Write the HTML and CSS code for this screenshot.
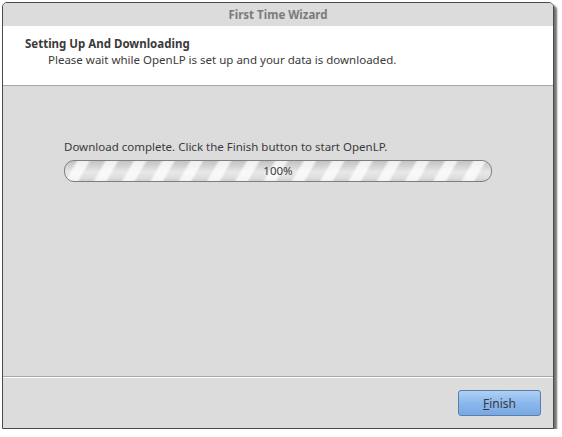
FILE: index.html
```html
<!DOCTYPE html>
<html>
<head>
<meta charset="utf-8">
<link rel="stylesheet" href="styles.css">
</head>
<body>
<div class="window">
  <div class="titlebar">First Time Wizard</div>
  <div class="header">
    <div class="h-title">Setting Up And Downloading</div>
    <div class="h-sub">Please wait while OpenLP is set up and your data is downloaded.</div>
  </div>
  <div class="content">
    <div class="status">Download complete. Click the Finish button to start OpenLP.</div>
    <div class="progress"><span class="pct">100%</span></div>
  </div>
  <div class="footer">
    <button class="btn"><span class="u">F</span>inish</button>
  </div>
</div>
</body>
</html>
```
FILE: styles.css
```css
html, body { margin: 0; padding: 0; background: #ffffff; }
body {
  font-family: "Noto Sans", "Open Sans", sans-serif;
  font-size: 11.5px;
  color: #3a3a3a;
  padding: 2px 0 0 2px;
}
.window {
  width: 550px;
  height: 425px;
  border: 1px solid #4a4a4a;
  border-radius: 5px 5px 0 0;
  background: #dcdcdc;
  box-shadow: 3px 3px 2px rgba(0,0,0,0.55);
  display: flex;
  flex-direction: column;
  overflow: hidden;
}
.titlebar {
  height: 23px;
  line-height: 23px;
  text-align: center;
  font-weight: bold;
  color: #7b7b7b;
  background: #dcdcdc;
  flex: none;
}
.header {
  background: #ffffff;
  border-bottom: 1px solid #a7a7a7;
  padding: 10px 0 0 22px;
  box-sizing: border-box;
  height: 60px;
  flex: none;
}
.h-title { font-weight: bold; line-height: 16px; }
.h-sub { padding-left: 23px; line-height: 16px; }
.content {
  flex: 1;
  padding: 52px 0 0 61px;
  border-bottom: 1px solid #a9a9a9;
  box-shadow: 0 1px 0 #ffffff;
}
.status { line-height: 18px; margin-bottom: 4px; }
.progress {
  width: 426px;
  height: 20px;
  border: 1px solid #7e7e7e;
  border-radius: 10px;
  background:
    repeating-linear-gradient(120deg,
      rgba(255,255,255,0) 0px, rgba(255,255,255,0) 9px,
      rgba(255,255,255,0.75) 12px, rgba(255,255,255,0.75) 20px,
      rgba(255,255,255,0) 23px, rgba(255,255,255,0) 24.5px),
    linear-gradient(#c4c4c4, #d6d6d6 30%, #e8e8e8 55%, #dedede 85%, #d0d0d0);
  text-align: center;
  line-height: 20px;
  color: #3a3a3a;
}
.footer {
  height: 50px;
  flex: none;
  display: flex;
  justify-content: flex-end;
  align-items: flex-start;
  padding: 12px 12px 0 0;
  box-sizing: border-box;
  margin-top: 1px;
}
.btn {
  width: 83px;
  height: 26px;
  border: 1px solid #5a7eab;
  border-radius: 3px;
  background: linear-gradient(#b0d0f4, #8ab8ec 50%, #79a8e2);
  font-family: inherit;
  font-size: 12px;
  color: #3a3a3a;
  padding: 0;
}
.u { text-decoration: underline; }
```
